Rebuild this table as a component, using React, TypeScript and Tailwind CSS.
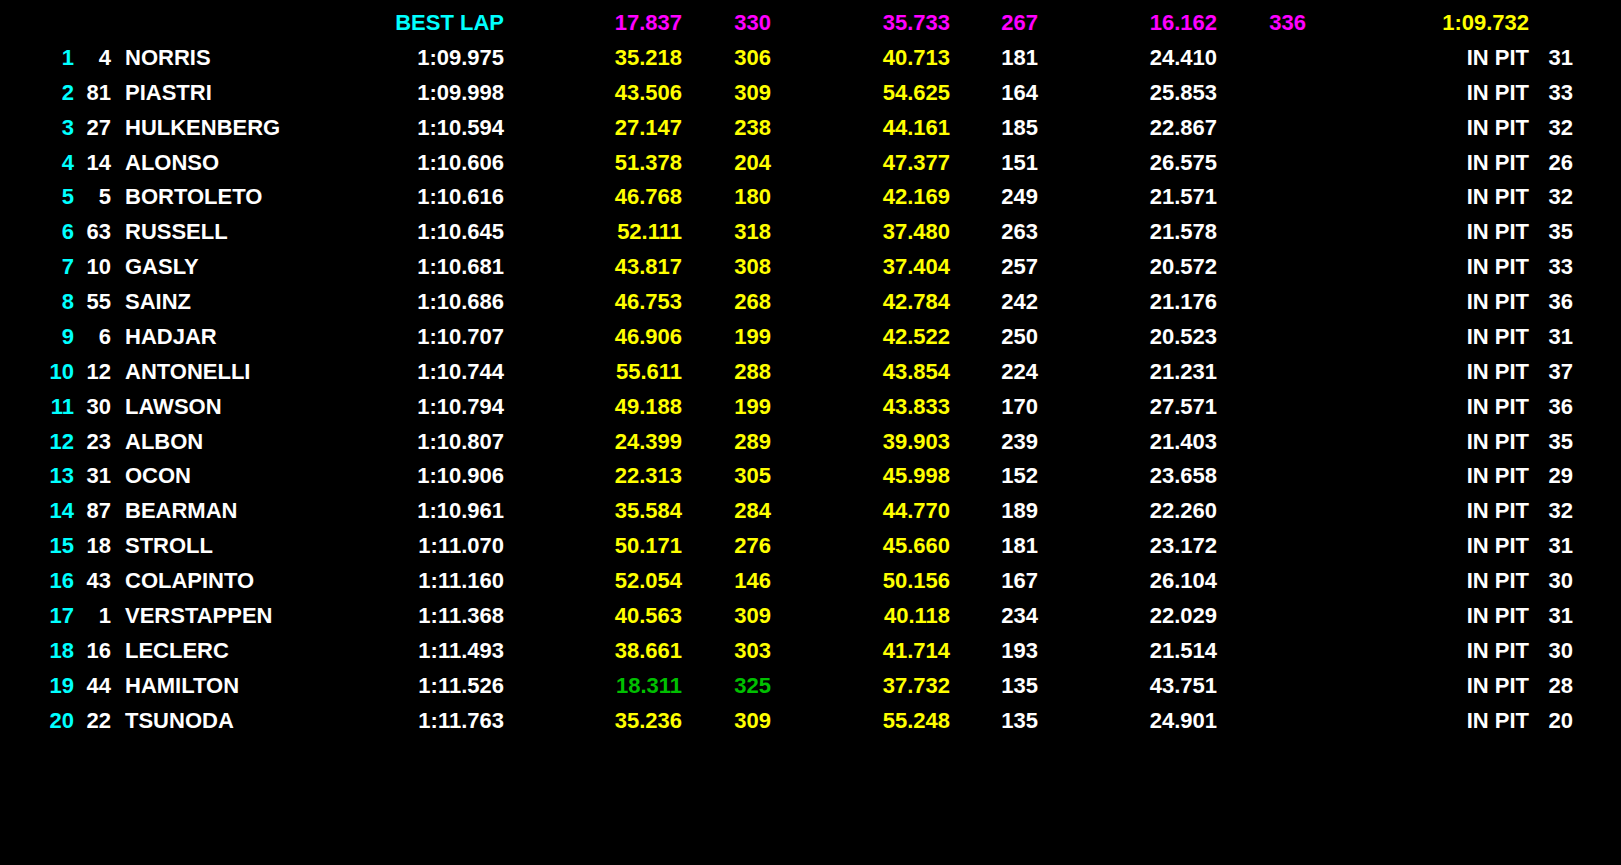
import React from "react";

type Row = [number, number, string, string, string, string, string, string, string, string];

const rows: Row[] = [
  [1, 4, "NORRIS", "1:09.975", "35.218", "306", "40.713", "181", "24.410", "31"],
  [2, 81, "PIASTRI", "1:09.998", "43.506", "309", "54.625", "164", "25.853", "33"],
  [3, 27, "HULKENBERG", "1:10.594", "27.147", "238", "44.161", "185", "22.867", "32"],
  [4, 14, "ALONSO", "1:10.606", "51.378", "204", "47.377", "151", "26.575", "26"],
  [5, 5, "BORTOLETO", "1:10.616", "46.768", "180", "42.169", "249", "21.571", "32"],
  [6, 63, "RUSSELL", "1:10.645", "52.111", "318", "37.480", "263", "21.578", "35"],
  [7, 10, "GASLY", "1:10.681", "43.817", "308", "37.404", "257", "20.572", "33"],
  [8, 55, "SAINZ", "1:10.686", "46.753", "268", "42.784", "242", "21.176", "36"],
  [9, 6, "HADJAR", "1:10.707", "46.906", "199", "42.522", "250", "20.523", "31"],
  [10, 12, "ANTONELLI", "1:10.744", "55.611", "288", "43.854", "224", "21.231", "37"],
  [11, 30, "LAWSON", "1:10.794", "49.188", "199", "43.833", "170", "27.571", "36"],
  [12, 23, "ALBON", "1:10.807", "24.399", "289", "39.903", "239", "21.403", "35"],
  [13, 31, "OCON", "1:10.906", "22.313", "305", "45.998", "152", "23.658", "29"],
  [14, 87, "BEARMAN", "1:10.961", "35.584", "284", "44.770", "189", "22.260", "32"],
  [15, 18, "STROLL", "1:11.070", "50.171", "276", "45.660", "181", "23.172", "31"],
  [16, 43, "COLAPINTO", "1:11.160", "52.054", "146", "50.156", "167", "26.104", "30"],
  [17, 1, "VERSTAPPEN", "1:11.368", "40.563", "309", "40.118", "234", "22.029", "31"],
  [18, 16, "LECLERC", "1:11.493", "38.661", "303", "41.714", "193", "21.514", "30"],
  [19, 44, "HAMILTON", "1:11.526", "18.311", "325", "37.732", "135", "43.751", "28"],
  [20, 22, "TSUNODA", "1:11.763", "35.236", "309", "55.248", "135", "24.901", "20"],
];

const grid =
  "grid grid-cols-[74px_37px_269px_124px_178px_89px_179px_88px_179px_89px_223px_44px] h-[34.88px] items-center whitespace-nowrap";

export default function App() {
  return (
    <div
      className="w-[1621px] h-[865px] bg-black overflow-hidden pt-[6px] font-bold text-[22px] leading-[34.88px] text-white"
      style={{ fontFamily: '"Liberation Sans", Arial, sans-serif' }}
    >
      <div className={grid}>
        <div />
        <div />
        <div />
        <div className="text-right text-[#00ffff]">BEST LAP</div>
        <div className="text-right text-[#ff00ff]">17.837</div>
        <div className="text-right text-[#ff00ff]">330</div>
        <div className="text-right text-[#ff00ff]">35.733</div>
        <div className="text-right text-[#ff00ff]">267</div>
        <div className="text-right text-[#ff00ff]">16.162</div>
        <div className="text-right text-[#ff00ff]">336</div>
        <div className="text-right text-[#ffff00]">1:09.732</div>
        <div />
      </div>
      {rows.map((r) => {
        const best = r[0] === 19;
        const s1c = best ? "text-[#00c000]" : "text-[#ffff00]";
        return (
          <div key={r[0]} className={grid}>
            <div className="text-right text-[#00ffff]">{r[0]}</div>
            <div className="text-right">{r[1]}</div>
            <div className="pl-[14px]">{r[2]}</div>
            <div className="text-right">{r[3]}</div>
            <div className={`text-right ${s1c}`}>{r[4]}</div>
            <div className={`text-right ${s1c}`}>{r[5]}</div>
            <div className="text-right text-[#ffff00]">{r[6]}</div>
            <div className="text-right">{r[7]}</div>
            <div className="text-right">{r[8]}</div>
            <div />
            <div className="text-right">IN PIT</div>
            <div className="text-right">{r[9]}</div>
          </div>
        );
      })}
    </div>
  );
}
